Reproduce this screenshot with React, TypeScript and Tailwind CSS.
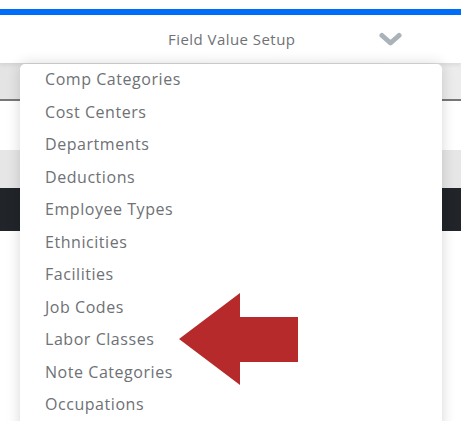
const items = [
  "Comp Categories",
  "Cost Centers",
  "Departments",
  "Deductions",
  "Employee Types",
  "Ethnicities",
  "Facilities",
  "Job Codes",
  "Labor Classes",
  "Note Categories",
  "Occupations",
];

export default function App() {
  return (
    <div
      className="relative h-[421px] w-[461px] overflow-hidden bg-white"
      style={{ fontFamily: "'Open Sans', 'Liberation Sans', sans-serif" }}
    >
      {/* top accent */}
      <div className="h-[9px] bg-white" />
      <div className="h-[6px] bg-[#006cfa]" />

      {/* header */}
      <div className="relative z-10 flex h-[48px] items-center bg-white shadow-[0_2px_4px_rgba(0,0,0,0.08)]">
        <span className="ml-[168px] text-[15px] tracking-[0.45px] text-[#6f7275]">
          Field Value Setup
        </span>
        <svg
          className="ml-auto mr-[59px]"
          width="23"
          height="15"
          viewBox="0 0 23 15"
          fill="none"
        >
          <path
            d="M3 3.5 L11.5 11 L20 3.5"
            stroke="#aab2ba"
            strokeWidth="5"
            strokeLinecap="round"
            strokeLinejoin="round"
          />
        </svg>
      </div>

      {/* background rows */}
      <div className="h-[38px] border-b-2 border-[#777] bg-gradient-to-r from-[#e4e4e4] to-[#ececec]" />
      <div className="h-[49px] bg-white" />
      <div className="h-[38px] bg-[#e6e6e6]" />
      <div className="h-[43px] bg-[#212529]" />

      {/* dropdown */}
      <div className="absolute left-[20px] top-[64px] z-20 h-[400px] w-[422px] rounded-[5px] bg-white shadow-[0_0_14px_rgba(0,0,0,0.16)]">
        <ul className="-mt-[1px] flex flex-col">
          {items.map((item) => (
            <li
              key={item}
              className="flex h-[32.5px] items-center pl-[25px] text-[16px] tracking-[0.55px] text-[#6e7175]"
            >
              {item}
            </li>
          ))}
        </ul>
      </div>

      {/* pointer arrow */}
      <svg
        className="absolute left-[178px] top-[292px] z-30"
        width="122"
        height="95"
        viewBox="0 0 122 95"
      >
        <polygon
          points="1,47 62,1 62,25 120,25 120,70 62,70 62,93"
          fill="#b62a2b"
        />
      </svg>
    </div>
  );
}
